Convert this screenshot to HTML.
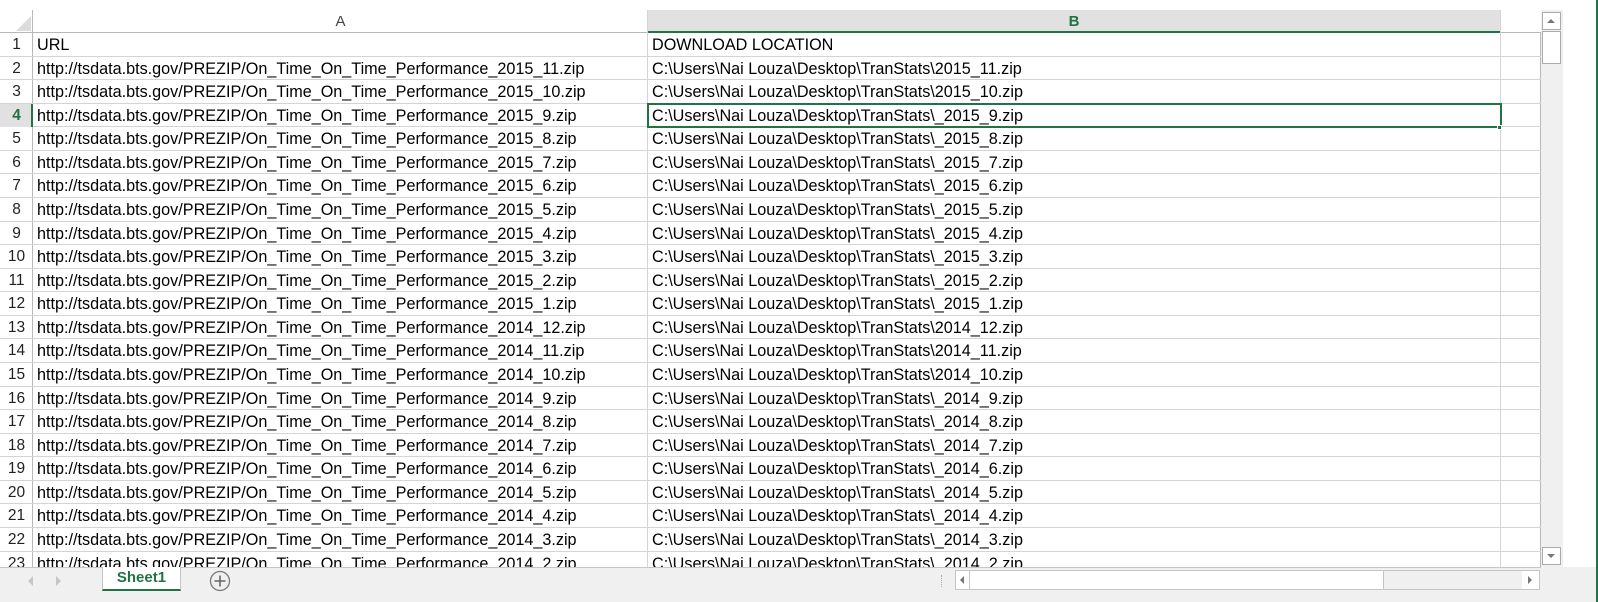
<!DOCTYPE html>
<html><head><meta charset="utf-8"><style>
*{margin:0;padding:0;box-sizing:border-box}
body{width:1598px;height:602px;background:#fff;position:relative;overflow:hidden;font-family:"Liberation Sans",Arial,sans-serif;color:#000}
.a{position:absolute}
.hl{position:absolute;left:0;width:1541px;height:1px;background:#d4d4d4}
.vl{position:absolute;top:10px;width:1px;height:557px;background:#d4d4d4}
.rn{position:absolute;left:0;width:33px;text-align:center;font-size:15.5px;color:#222;height:23px;line-height:24px}
.c{position:absolute;font-size:16.2px;height:23px;line-height:24px;white-space:nowrap}
</style></head><body>
<div class="a" style="left:0;top:10px;width:33px;height:23px;background:#fff"></div>
<svg class="a" style="left:14px;top:16px" width="18" height="16"><polygon points="17,0 17,15 2,15" fill="#dcdcdc"/></svg>
<div class="a" style="left:648px;top:10px;width:852px;height:23px;background:#e1e1e1"></div>
<div class="a" style="left:33px;top:10px;width:615px;height:23px;line-height:23px;text-align:center;font-size:15px;color:#444">A</div>
<div class="a" style="left:648px;top:10px;width:852px;height:23px;line-height:23px;text-align:center;font-size:15px;color:#217346;font-weight:bold">B</div>
<div class="a" style="left:0;top:32px;width:1541px;height:1px;background:#b8b8b8"></div>
<div class="a" style="left:648px;top:31px;width:852px;height:2px;background:#217346"></div>
<div class="a" style="left:32px;top:10px;width:1px;height:557px;background:#b8b8b8"></div>
<div class="vl" style="left:647px"></div>
<div class="vl" style="left:1500px"></div>
<div class="vl" style="left:1540px;background:#b8b8b8;top:33px;height:534px"></div>
<div id="rows"></div>
<div class="a" style="left:0;top:104px;width:32px;height:23px;background:#e1e1e1"></div>
<div class="a" style="left:31px;top:104px;width:2px;height:23px;background:#217346"></div>
<div class="a" style="left:647px;top:103px;width:855px;height:25px;border:2px solid #217346"></div>
<div class="a" style="left:1497px;top:125px;width:5px;height:5px;background:#217346;border:1px solid #fff"></div>
<div class="a" style="left:1541px;top:10px;width:22px;height:557px;background:#f0f0f0"></div>
<div class="a" style="left:1542px;top:12px;width:19px;height:18px;background:#fff;border:1px solid #ababab"></div>
<svg class="a" style="left:1546px;top:17px" width="10" height="8"><polygon points="1,6 5,2 9,6" fill="#777"/></svg>
<div class="a" style="left:1542px;top:31px;width:19px;height:33px;background:#fff;border:1px solid #ababab"></div>
<div class="a" style="left:1542px;top:547px;width:19px;height:18px;background:#fff;border:1px solid #ababab"></div>
<svg class="a" style="left:1546px;top:552px" width="10" height="8"><polygon points="1,2 5,6 9,2" fill="#777"/></svg>
<div class="a" style="left:1596px;top:0;width:2px;height:602px;background:#217346"></div>
<div class="a" style="left:0;top:567px;width:1596px;height:35px;background:#f0f0f0"></div>
<div class="a" style="left:0;top:567px;width:1541px;height:1px;background:#c6c6c6"></div>
<svg class="a" style="left:26px;top:574px" width="40" height="14"><polygon points="7,2 2,7 7,12" fill="#c6c6c6"/><polygon points="30,2 35,7 30,12" fill="#c6c6c6"/></svg>
<div class="a" style="left:102px;top:567px;width:79px;height:24px;background:#fff;border:1px solid #c6c6c6;border-top:none;border-bottom:2px solid #217346;text-align:center;line-height:22px;font-weight:bold;color:#217346;font-size:15px">Sheet1</div>
<svg class="a" style="left:209px;top:570px" width="22" height="22"><circle cx="11" cy="11" r="9.5" fill="none" stroke="#777" stroke-width="1.3"/><path d="M11 5.5V16.5M5.5 11H16.5" stroke="#666" stroke-width="1.6"/></svg>
<div class="a" style="left:941px;top:575px;width:1px;height:12px;border-left:1px dotted #aaa"></div>
<div class="a" style="left:955px;top:570px;width:585px;height:20px;background:#fff;border:1px solid #c6c6c6"></div>
<div class="a" style="left:969px;top:571px;width:415px;height:18px;border:1px solid #c6c6c6;border-top:none;border-bottom:none"></div>
<div class="a" style="left:1384px;top:571px;width:138px;height:18px;background:#f0f0f0"></div>
<svg class="a" style="left:958px;top:574px" width="10" height="12"><polygon points="6,2 2,6 6,10" fill="#777"/></svg>
<svg class="a" style="left:1525px;top:574px" width="10" height="12"><polygon points="3,2 7,6 3,10" fill="#777"/></svg>
<script>
var A=["URL"],B=["DOWNLOAD LOCATION"];
var l=[["2015_11","2015_11"],["2015_10","2015_10"],["2015_9","_2015_9"],["2015_8","_2015_8"],["2015_7","_2015_7"],["2015_6","_2015_6"],["2015_5","_2015_5"],["2015_4","_2015_4"],["2015_3","_2015_3"],["2015_2","_2015_2"],["2015_1","_2015_1"],["2014_12","2014_12"],["2014_11","2014_11"],["2014_10","2014_10"],["2014_9","_2014_9"],["2014_8","_2014_8"],["2014_7","_2014_7"],["2014_6","_2014_6"],["2014_5","_2014_5"],["2014_4","_2014_4"],["2014_3","_2014_3"],["2014_2","_2014_2"]];
l.forEach(function(p){A.push("http://tsdata.bts.gov/PREZIP/On_Time_On_Time_Performance_"+p[0]+".zip");B.push("C:\\Users\\Nai Louza\\Desktop\\TranStats\\"+p[1]+".zip");});
var h="";
for(var i=0;i<23;i++){var t=Math.round(33+i*23.57);var nt=Math.round(33+(i+1)*23.57);
h+='<div class="rn" style="top:'+t+'px;'+(i==3?'color:#217346;font-weight:bold;z-index:3':'')+'">'+(i+1)+'</div>';
h+='<div class="c" style="left:37px;top:'+t+'px">'+A[i]+'</div>';
h+='<div class="c" style="left:652px;top:'+t+'px">'+B[i]+'</div>';
if(i<22)h+='<div class="hl" style="top:'+(nt-1)+'px"></div>';}
document.getElementById("rows").innerHTML=h;
</script>
</body></html>
